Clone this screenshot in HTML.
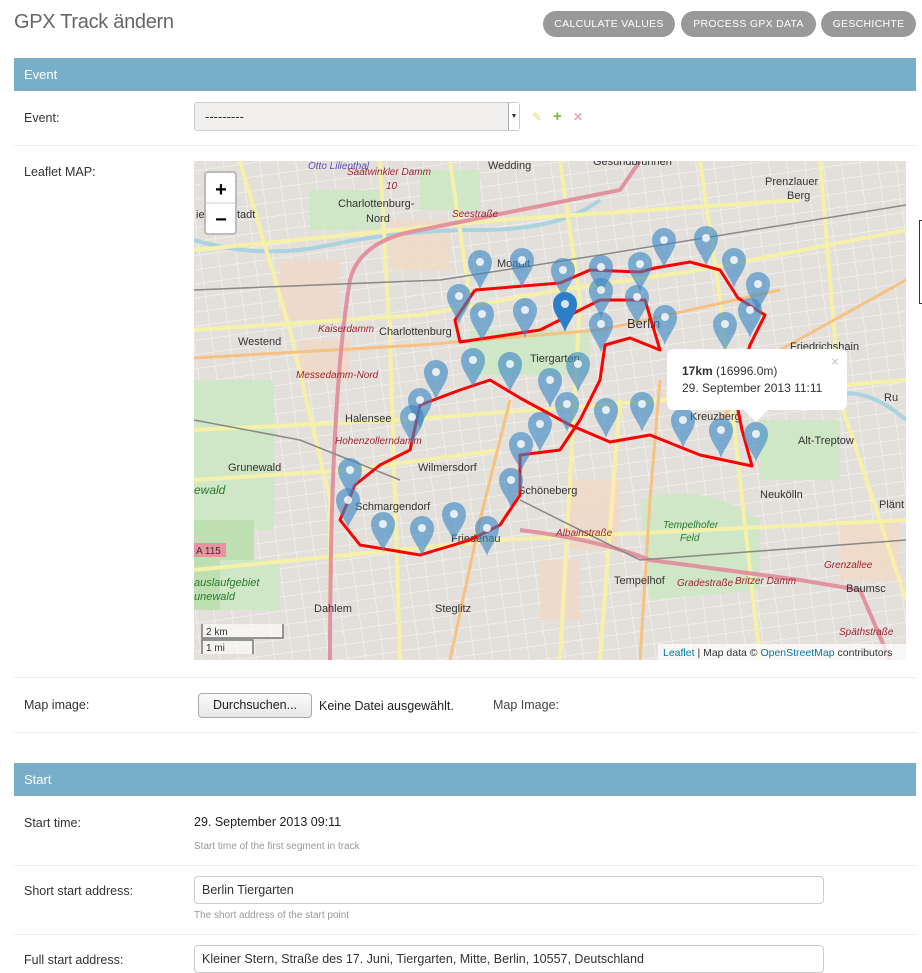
<!DOCTYPE html>
<html><head><meta charset="utf-8"><style>
body{margin:0;background:#fff;font-family:"Liberation Sans",sans-serif;color:#444;width:922px;height:964px;overflow:hidden;position:relative}
.abs{position:absolute}
h1{position:absolute;left:14px;top:11px;margin:0;font-weight:normal;font-size:20px;color:#666;letter-spacing:-0.3px}
.btn{position:absolute;top:11px;height:26px;line-height:26px;border-radius:13px;background:#999;color:#fff;font-size:10.5px;text-align:center;letter-spacing:.3px}
.bar{position:absolute;left:14px;width:902px;height:33px;background:#79aec8;color:#fff;font-size:13px;line-height:33px;text-indent:10px}
.lbl{position:absolute;left:24px;font-size:12.5px;color:#333}
.hr{position:absolute;left:14px;width:902px;height:1px;background:#eee}
.help{position:absolute;left:194px;font-size:10px;color:#999}
.inp{position:absolute;left:194px;width:630px;height:28px;border:1px solid #ccc;border-radius:4px;box-sizing:border-box;font-size:12.5px;color:#333;line-height:26px;padding-left:7px}
</style></head><body>
<h1>GPX Track ändern</h1>
<div class="btn" style="left:543px;width:132px">CALCULATE VALUES</div>
<div class="btn" style="left:681px;width:135px">PROCESS GPX DATA</div>
<div class="btn" style="left:821px;width:95px">GESCHICHTE</div>

<div class="bar" style="top:58px">Event</div>
<div class="lbl" style="top:111px">Event:</div>
<div class="abs" style="left:194px;top:102px;width:326px;height:29px;border:1px solid #ccc;border-radius:3px;background:#f1f0ee;box-sizing:border-box;font-size:13px;line-height:27px;padding-left:10px;color:#333">---------<div class="abs" style="right:0;top:0;width:10px;height:27px;border-left:1px solid #aaa;background:#fff;font-size:7px;text-align:center;line-height:27px">▼</div></div>
<div class="abs" style="left:532px;top:110px;font-size:12px;color:#f0d870">✎</div>
<div class="abs" style="left:553px;top:108px;font-size:15px;color:#70bf2b;font-weight:bold">+</div>
<div class="abs" style="left:573px;top:110px;font-size:12px;color:#efa9a9;font-weight:bold">✕</div>
<div class="hr" style="top:145px"></div>
<div class="lbl" style="top:165px">Leaflet MAP:</div>

<svg class="abs" style="left:194px;top:161px" width="712" height="499" viewBox="194 161 712 499">
<defs>
<pattern id="grid" width="18" height="14" patternUnits="userSpaceOnUse" patternTransform="rotate(-8)">
<path d="M0 0 H18 M0 0 V14" stroke="#f7f5f2" stroke-width="1.2" fill="none"/>
</pattern>
<path id="pin" d="M0 0 C-3 -10 -12 -18 -12 -28 A12 12 0 1 1 12 -28 C12 -18 3 -10 0 0Z"/>
</defs>
<rect x="194" y="161" width="712" height="499" fill="#e3e0dc"/>
<rect x="194" y="161" width="712" height="499" fill="url(#grid)"/>
<g fill="#cde8c4" opacity=".9">
<rect x="470" y="330" width="120" height="45"/><path d="M640 500 Q700 480 760 520 L760 590 L650 600Z"/><rect x="194" y="380" width="80" height="150"/><rect x="194" y="520" width="60" height="90" fill="#b9dfae"/><rect x="310" y="190" width="70" height="40"/><rect x="760" y="420" width="80" height="60"/><rect x="220" y="560" width="60" height="50"/><rect x="420" y="170" width="60" height="40"/>
</g>
<g fill="#f0d9c6" opacity=".8"><rect x="280" y="260" width="60" height="60"/><rect x="390" y="220" width="60" height="50"/><rect x="570" y="480" width="50" height="70"/><rect x="840" y="520" width="60" height="60"/><rect x="300" y="340" width="50" height="40"/><rect x="540" y="560" width="40" height="60"/></g>
<g stroke="#aad3df" stroke-width="4" fill="none"><path d="M194 240 Q260 260 330 245 T480 230 T600 200"/><path d="M700 360 Q780 420 820 400 T906 420"/></g>
<g stroke="#f5f1a8" stroke-width="4" fill="none">
<path d="M194 330 L420 315 L560 290 L700 270 L906 230"/><path d="M194 430 L400 420 L600 405 L906 380"/><path d="M240 161 L290 330 L330 500 L330 660"/><path d="M380 161 L390 340 L400 660"/><path d="M560 161 L580 300 L560 660"/><path d="M700 161 L720 300 L760 660"/><path d="M194 570 L500 540 L906 520"/><path d="M820 161 L840 400 L906 600"/><path d="M194 250 L500 220 L800 200"/><path d="M620 400 L600 660"/><path d="M194 480 L350 470 L500 450"/><path d="M450 161 L470 300"/>
</g>
<g stroke="#f7c184" stroke-width="3" fill="none"><path d="M194 358 L420 345 L600 330 L780 290"/><path d="M450 660 L480 520 L510 400"/><path d="M640 660 L650 500 L660 380"/><path d="M906 280 L780 350 L720 420"/></g>
<g stroke="#e293a0" stroke-width="4" fill="none"><path d="M330 660 Q330 400 350 280 Q360 240 420 230 L620 190 L640 161"/><path d="M520 530 Q600 540 650 560 L800 580 L860 590 L890 660"/></g>
<g stroke="#888" stroke-width="1.5" fill="none"><path d="M194 290 L440 280 L600 255 L906 205"/><path d="M520 500 L640 560 L906 540"/><path d="M194 420 L300 440 L400 480"/></g>
<g font-family="Liberation Sans" font-size="11" fill="#333">
<text x="488" y="169">Wedding</text><text x="593" y="165">Gesundbrunnen</text><text x="338" y="207">Charlottenburg-</text><text x="366" y="222">Nord</text><text x="196" y="218">iemensstadt</text><text x="765" y="185">Prenzlauer</text><text x="787" y="199">Berg</text><text x="497" y="267">Moabit</text><text x="379" y="335">Charlottenburg</text><text x="238" y="345">Westend</text><text x="627" y="328" font-size="13">Berlin</text><text x="530" y="362">Tiergarten</text><text x="790" y="350">Friedrichshain</text><text x="345" y="422">Halensee</text><text x="690" y="420">Kreuzberg</text><text x="798" y="444">Alt-Treptow</text><text x="228" y="471">Grunewald</text><text x="418" y="471">Wilmersdorf</text><text x="760" y="498">Neukölln</text><text x="518" y="494">Schöneberg</text><text x="355" y="510">Schmargendorf</text><text x="451" y="542">Friedenau</text><text x="614" y="584">Tempelhof</text><text x="314" y="612">Dahlem</text><text x="435" y="612">Steglitz</text><text x="846" y="592">Baumsc</text><text x="879" y="508">Plänt</text><text x="884" y="401">Ru</text>
</g>
<g font-family="Liberation Sans" font-size="10" font-style="italic" fill="#a02533">
<text x="347" y="175">Saatwinkler Damm</text><text x="386" y="189">10</text><text x="452" y="217">Seestraße</text><text x="318" y="332">Kaiserdamm</text><text x="296" y="378">Messedamm-Nord</text><text x="335" y="444">Hohenzollerndamm</text><text x="556" y="536">Albainstraße</text><text x="677" y="586">Gradestraße</text><text x="735" y="584">Britzer Damm</text><text x="824" y="568">Grenzallee</text><text x="839" y="635">Späthstraße</text>
</g>
<text x="308" y="169" font-size="10" font-style="italic" fill="#5a4fb0" font-family="Liberation Sans">Otto Lilienthal</text>
<text x="663" y="528" font-size="10" font-style="italic" fill="#2a7a2a" font-family="Liberation Sans">Tempelhofer</text><text x="680" y="541" font-size="10" font-style="italic" fill="#2a7a2a" font-family="Liberation Sans">Feld</text>
<text x="194" y="494" font-size="12" font-style="italic" fill="#2a7a2a" font-family="Liberation Sans">ewald</text>
<text x="194" y="586" font-size="11" font-style="italic" fill="#2a7a2a" font-family="Liberation Sans">auslaufgebiet</text><text x="194" y="600" font-size="11" font-style="italic" fill="#2a7a2a" font-family="Liberation Sans">unewald</text>
<rect x="194" y="543" width="32" height="14" fill="#e893a0"/><text x="196" y="554" font-size="10" fill="#333" font-family="Liberation Sans">A 115</text>
<polyline fill="none" stroke="#f00" stroke-width="3" stroke-linejoin="round" points="475,290 560,283 590,270 640,272 655,268 690,262 720,270 738,298 765,315 750,345 735,395 742,430 752,466 700,455 650,435 610,442 570,425 520,398 490,380 460,390 420,405 410,450 380,465 355,485 340,520 360,545 420,555 470,540 500,525 520,495 520,455 560,450 580,420 600,380 605,345 630,338 660,350 645,300 600,300 540,330 460,342 455,320 475,290"/>
<g fill="#3a87c4" fill-opacity=".62">
<use href="#pin" x="480" y="290"/><use href="#pin" x="522" y="288"/><use href="#pin" x="563" y="298"/><use href="#pin" x="601" y="295"/><use href="#pin" x="640" y="292"/><use href="#pin" x="664" y="268"/><use href="#pin" x="706" y="266"/><use href="#pin" x="734" y="288"/><use href="#pin" x="758" y="312"/><use href="#pin" x="459" y="324"/><use href="#pin" x="482" y="342"/><use href="#pin" x="525" y="338"/><use href="#pin" x="601" y="352"/><use href="#pin" x="637" y="325"/><use href="#pin" x="665" y="345"/><use href="#pin" x="725" y="352"/><use href="#pin" x="750" y="338"/><use href="#pin" x="436" y="400"/><use href="#pin" x="473" y="388"/><use href="#pin" x="510" y="392"/><use href="#pin" x="550" y="408"/><use href="#pin" x="578" y="392"/><use href="#pin" x="420" y="428"/><use href="#pin" x="412" y="445"/><use href="#pin" x="540" y="452"/><use href="#pin" x="567" y="432"/><use href="#pin" x="606" y="438"/><use href="#pin" x="642" y="432"/><use href="#pin" x="683" y="448"/><use href="#pin" x="721" y="458"/><use href="#pin" x="756" y="462"/><use href="#pin" x="521" y="472"/><use href="#pin" x="511" y="508"/><use href="#pin" x="350" y="498"/><use href="#pin" x="348" y="528"/><use href="#pin" x="383" y="552"/><use href="#pin" x="422" y="556"/><use href="#pin" x="454" y="542"/><use href="#pin" x="487" y="556"/><use href="#pin" x="601" y="318"/>
</g>
<use href="#pin" x="565" y="332" fill="#2a7fc6"/>
<g fill="#fff" fill-opacity=".8">
<circle cx="480" cy="262" r="4"/><circle cx="522" cy="260" r="4"/><circle cx="563" cy="270" r="4"/><circle cx="601" cy="267" r="4"/><circle cx="640" cy="264" r="4"/><circle cx="664" cy="240" r="4"/><circle cx="706" cy="238" r="4"/><circle cx="734" cy="260" r="4"/><circle cx="758" cy="284" r="4"/><circle cx="459" cy="296" r="4"/><circle cx="482" cy="314" r="4"/><circle cx="525" cy="310" r="4"/><circle cx="601" cy="324" r="4"/><circle cx="637" cy="297" r="4"/><circle cx="665" cy="317" r="4"/><circle cx="725" cy="324" r="4"/><circle cx="750" cy="310" r="4"/><circle cx="436" cy="372" r="4"/><circle cx="473" cy="360" r="4"/><circle cx="510" cy="364" r="4"/><circle cx="550" cy="380" r="4"/><circle cx="578" cy="364" r="4"/><circle cx="420" cy="400" r="4"/><circle cx="412" cy="417" r="4"/><circle cx="540" cy="424" r="4"/><circle cx="567" cy="404" r="4"/><circle cx="606" cy="410" r="4"/><circle cx="642" cy="404" r="4"/><circle cx="683" cy="420" r="4"/><circle cx="721" cy="430" r="4"/><circle cx="756" cy="434" r="4"/><circle cx="521" cy="444" r="4"/><circle cx="511" cy="480" r="4"/><circle cx="350" cy="470" r="4"/><circle cx="348" cy="500" r="4"/><circle cx="383" cy="524" r="4"/><circle cx="422" cy="528" r="4"/><circle cx="454" cy="514" r="4"/><circle cx="487" cy="528" r="4"/><circle cx="601" cy="290" r="4"/><circle cx="565" cy="304" r="4"/>
</g>
<path d="M674 349 H840 Q847 349 847 356 V403 Q847 410 840 410 H768 L756 422 L744 410 H674 Q667 410 667 403 V356 Q667 349 674 349Z" fill="#fff"/>
<text x="831" y="366" font-size="14" fill="#c3c3c3" font-family="Liberation Sans">×</text>
<text x="682" y="375" font-size="12" fill="#333" font-family="Liberation Sans"><tspan font-weight="bold">17km</tspan> (16996.0m)</text>
<text x="682" y="392" font-size="12" fill="#333" font-family="Liberation Sans">29. September 2013 11:11</text>
<rect x="205" y="172" width="31" height="62" rx="3" fill="#fff" stroke="#bbb" stroke-width="2"/><line x1="206" y1="203" x2="235" y2="203" stroke="#ccc"/>
<text x="221" y="196" font-size="20" text-anchor="middle" font-weight="bold" fill="#000" font-family="Liberation Sans">+</text>
<text x="221" y="226" font-size="20" text-anchor="middle" font-weight="bold" fill="#000" font-family="Liberation Sans">−</text>
<rect x="201" y="624" width="82" height="14" fill="#fff" fill-opacity=".6"/><path d="M202 624 V638 H283 V624" fill="none" stroke="#777" stroke-width="1.5"/>
<rect x="201" y="640" width="53" height="14" fill="#fff" fill-opacity=".6"/><path d="M202 654 V640 H253 V654" fill="none" stroke="#777" stroke-width="1.5"/>
<text x="206" y="635" font-size="10" fill="#333" font-family="Liberation Sans">2 km</text><text x="206" y="651" font-size="10" fill="#333" font-family="Liberation Sans">1 mi</text>
<rect x="658" y="644" width="248" height="16" fill="#fff" fill-opacity=".75"/>
<text x="663" y="656" font-size="10.5" fill="#333" font-family="Liberation Sans"><tspan fill="#0078a8">Leaflet</tspan> | Map data © <tspan fill="#0078a8">OpenStreetMap</tspan> contributors</text>
</svg>
<div class="abs" style="left:919px;top:220px;width:3px;height:82px;border:1px solid #333;border-right:none"></div>

<div class="hr" style="top:677px"></div>
<div class="lbl" style="top:698px">Map image:</div>
<div class="abs" style="left:198px;top:693px;width:114px;height:25px;border:1px solid #aaa;border-radius:4px;background:linear-gradient(#fafafa,#e8e8e8);box-sizing:border-box;font-size:12.5px;text-align:center;line-height:23px;color:#222">Durchsuchen...</div>
<div class="abs" style="left:319px;top:699px;font-size:12.5px;color:#222">Keine Datei ausgewählt.</div>
<div class="abs" style="left:493px;top:698px;font-size:12.5px;color:#444">Map Image:</div>
<div class="hr" style="top:732px"></div>

<div class="bar" style="top:763px">Start</div>
<div class="lbl" style="top:816px">Start time:</div>
<div class="abs" style="left:194px;top:815px;font-size:12.5px;color:#222">29. September 2013 09:11</div>
<div class="help" style="top:841px">Start time of the first segment in track</div>
<div class="hr" style="top:865px"></div>
<div class="lbl" style="top:884px">Short start address:</div>
<div class="inp" style="top:876px">Berlin Tiergarten</div>
<div class="help" style="top:910px">The short address of the start point</div>
<div class="hr" style="top:934px"></div>
<div class="lbl" style="top:953px">Full start address:</div>
<div class="inp" style="top:945px">Kleiner Stern, Straße des 17. Juni, Tiergarten, Mitte, Berlin, 10557, Deutschland</div>
</body></html>
